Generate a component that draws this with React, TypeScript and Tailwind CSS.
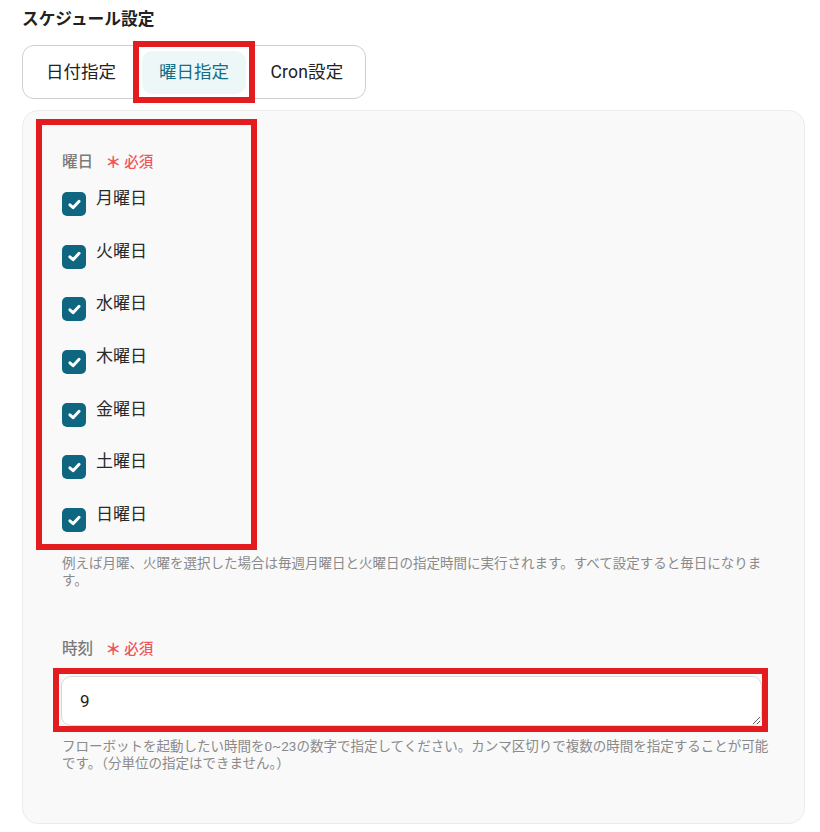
import React from "react";

const days = ["月曜日", "火曜日", "水曜日", "木曜日", "金曜日", "土曜日", "日曜日"];

const Required = () => (
  <span className="ml-[12px] text-[14.5px] font-medium text-[#f2545b] flex items-center">
    <span className="mr-[3px] font-bold text-[16px]">＊</span>必須
  </span>
);

const CheckBox = () => (
  <div className="mt-[6px] w-[24px] h-[24px] rounded-[5px] bg-[#0f6680] flex items-center justify-center">
    <svg viewBox="0 0 24 24" className="w-[17px] h-[17px]" fill="none">
      <path d="M5.5 12.5 L10 16.5 L18.5 7.5" stroke="white" strokeWidth={4.2} strokeLinecap="round" strokeLinejoin="round" />
    </svg>
  </div>
);

const App = () => {
  return (
    <div
      className="w-[820px] h-[832px] bg-white text-[#222] pl-[22px] pt-[8px]"
      style={{ fontFamily: 'Roboto, "Noto Sans CJK JP", sans-serif' }}
    >
      <p className="text-[16.7px] leading-[24px] font-semibold">スケジュール設定</p>

      <div className="mt-[13px] inline-flex gap-[9px] px-[6px] border border-[#cfcfcf] rounded-[12px] h-[54px] items-center">
        <div className="w-[104px] h-[43px] flex items-center justify-center text-[17.5px]">日付指定</div>
        <div className="relative w-[104px] h-[43px] flex items-center justify-center text-[17.5px] bg-[#edf7f7] text-[#116f89] rounded-[10px]">
          曜日指定
          <span className="absolute -left-[9px] -right-[9px] -top-[10px] -bottom-[9px] border-[6px] border-[#e31c1f]" />
        </div>
        <div className="w-[104px] h-[43px] flex items-center justify-center text-[17.5px] tracking-[0.2px]">Cron設定</div>
      </div>

      <div className="mt-[11px] w-[783px] h-[714px] bg-[#f9f9f9] border border-[#ececec] rounded-[16px] pt-[8px] pl-[39px] pr-[30px]">
        <div className="-ml-[26px] w-[221px] border-[6px] border-[#e31c1f] pl-[20px] pt-[27px] pb-[12px]">
          <div className="flex items-center h-[22px]">
            <span className="text-[15.6px] font-medium text-[#7a7a7a]">曜日</span>
            <Required />
          </div>
          <div className="mt-[12px] flex flex-col gap-[22.7px]">
            {days.map((d) => (
              <div key={d} className="flex items-start h-[30px]">
                <CheckBox />
                <span className="ml-[10px] text-[17px] leading-[24px] text-[#2a2a2a]">{d}</span>
              </div>
            ))}
          </div>
        </div>

        <p className="mt-[5px] text-[13.5px] leading-[17px] text-[#8a8a8a]">
          例えば月曜、火曜を選択した場合は毎週月曜日と火曜日の指定時間に実行されます。すべて設定すると毎日になります。
        </p>

        <div className="mt-[50px] flex items-center h-[22px]">
          <span className="text-[15.6px] font-medium text-[#7a7a7a]">時刻</span>
          <Required />
        </div>

        <div className="mt-[7px] -ml-[9px] w-[715px] border-[6px] border-[#e31c1f] pt-[2px] pl-[2px]">
          <textarea
            readOnly
            value="9"
            rows={1}
            className="block w-full h-[50px] bg-white border border-[#d9d9d9] rounded-[10px] pl-[18px] py-[12px] text-[17px] leading-[24px] text-[#222] outline-none"
          />
        </div>

        <p className="mt-[6px] text-[13.5px] leading-[17px] text-[#8a8a8a]">
          フローボットを起動したい時間を0~23の数字で指定してください。カンマ区切りで複数の時間を指定することが可能です。（分単位の指定はできません。）
        </p>
      </div>
    </div>
  );
};

export default App;
